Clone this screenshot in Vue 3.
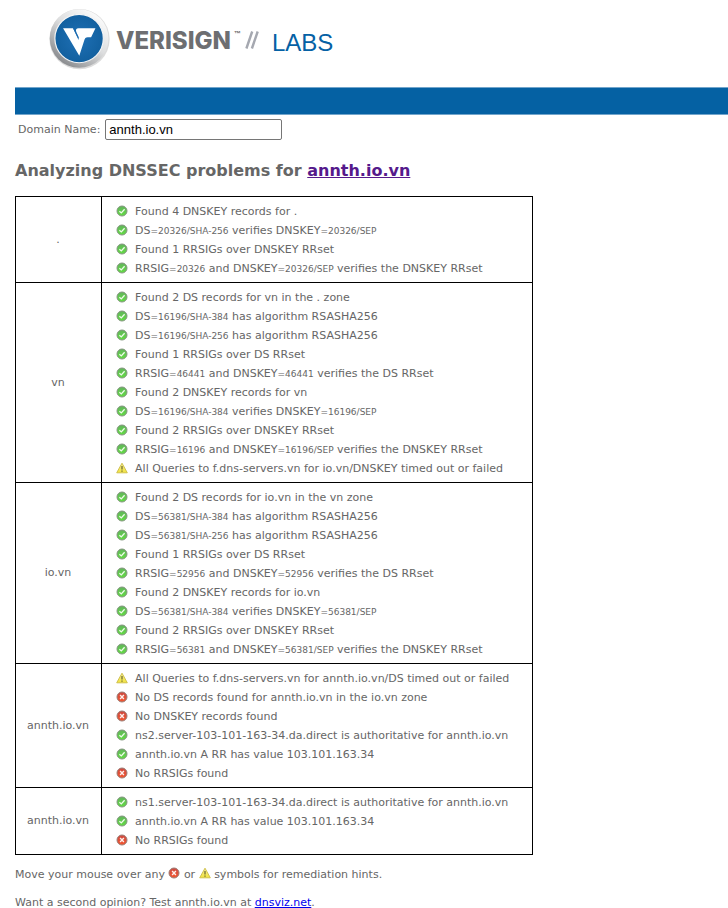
<script setup>
import { ref, h } from 'vue'

const domain = ref('annth.io.vn')

/* Text between square brackets is set in the small key size. */
const zones = [
  {
    name: '.',
    checks: [
      ['ok', 'Found 4 DNSKEY records for .'],
      ['ok', 'DS[=20326/SHA-256] verifies DNSKEY[=20326/SEP]'],
      ['ok', 'Found 1 RRSIGs over DNSKEY RRset'],
      ['ok', 'RRSIG[=20326] and DNSKEY[=20326/SEP] verifies the DNSKEY RRset'],
    ],
  },
  {
    name: 'vn',
    checks: [
      ['ok', 'Found 2 DS records for vn in the . zone'],
      ['ok', 'DS[=16196/SHA-384] has algorithm RSASHA256'],
      ['ok', 'DS[=16196/SHA-256] has algorithm RSASHA256'],
      ['ok', 'Found 1 RRSIGs over DS RRset'],
      ['ok', 'RRSIG[=46441] and DNSKEY[=46441] verifies the DS RRset'],
      ['ok', 'Found 2 DNSKEY records for vn'],
      ['ok', 'DS[=16196/SHA-384] verifies DNSKEY[=16196/SEP]'],
      ['ok', 'Found 2 RRSIGs over DNSKEY RRset'],
      ['ok', 'RRSIG[=16196] and DNSKEY[=16196/SEP] verifies the DNSKEY RRset'],
      ['warn', 'All Queries to f.dns-servers.vn for io.vn/DNSKEY timed out or failed'],
    ],
  },
  {
    name: 'io.vn',
    checks: [
      ['ok', 'Found 2 DS records for io.vn in the vn zone'],
      ['ok', 'DS[=56381/SHA-384] has algorithm RSASHA256'],
      ['ok', 'DS[=56381/SHA-256] has algorithm RSASHA256'],
      ['ok', 'Found 1 RRSIGs over DS RRset'],
      ['ok', 'RRSIG[=52956] and DNSKEY[=52956] verifies the DS RRset'],
      ['ok', 'Found 2 DNSKEY records for io.vn'],
      ['ok', 'DS[=56381/SHA-384] verifies DNSKEY[=56381/SEP]'],
      ['ok', 'Found 2 RRSIGs over DNSKEY RRset'],
      ['ok', 'RRSIG[=56381] and DNSKEY[=56381/SEP] verifies the DNSKEY RRset'],
    ],
  },
  {
    name: 'annth.io.vn',
    checks: [
      ['warn', 'All Queries to f.dns-servers.vn for annth.io.vn/DS timed out or failed'],
      ['bad', 'No DS records found for annth.io.vn in the io.vn zone'],
      ['bad', 'No DNSKEY records found'],
      ['ok', 'ns2.server-103-101-163-34.da.direct is authoritative for annth.io.vn'],
      ['ok', 'annth.io.vn A RR has value 103.101.163.34'],
      ['bad', 'No RRSIGs found'],
    ],
  },
  {
    name: 'annth.io.vn',
    checks: [
      ['ok', 'ns1.server-103-101-163-34.da.direct is authoritative for annth.io.vn'],
      ['ok', 'annth.io.vn A RR has value 103.101.163.34'],
      ['bad', 'No RRSIGs found'],
    ],
  },
]

const parts = (text) =>
  text
    .split(/(\[[^\]]+\])/)
    .filter(Boolean)
    .map((t) => ({ small: t[0] === '[', text: t.replace(/[[\]]/g, '') }))

const StatusIcon = (props) => {
  const attrs = { class: 'status-icon', viewBox: '0 0 12 12', 'aria-hidden': 'true' }
  if (props.kind === 'warn') {
    return h('svg', attrs, [
      h('path', {
        d: 'M6 1.2 11.3 10.8H.7Z',
        fill: 'url(#g-warn)',
        stroke: '#cfc04c',
        'stroke-linejoin': 'round',
      }),
      h('path', { d: 'M6 4v3.4M6 8.4v1.3', stroke: '#65622c', 'stroke-width': 1.2 }),
    ])
  }
  const ok = props.kind === 'ok'
  return h('svg', attrs, [
    h('circle', {
      cx: 6,
      cy: 6,
      r: 5,
      fill: ok ? 'url(#g-ok)' : 'url(#g-bad)',
      stroke: ok ? '#84967f' : '#9a7d76',
    }),
    h('path', {
      d: ok ? 'M3.4 6.2 5.3 7.9 8.6 4.2' : 'M4.1 4.1 7.9 7.9M7.9 4.1 4.1 7.9',
      fill: 'none',
      stroke: ok ? '#f0fbec' : '#fdeeea',
      'stroke-width': ok ? 1.3 : 1.4,
    }),
  ])
}
StatusIcon.props = ['kind']
</script>

<template>
  <div class="page">
    <svg class="defs" width="0" height="0" aria-hidden="true">
      <defs>
        <linearGradient id="g-ok" x2="0" y2="1">
          <stop offset="0" stop-color="#62b45c" />
          <stop offset="1" stop-color="#62dc42" />
        </linearGradient>
        <linearGradient id="g-bad" x2="0" y2="1">
          <stop offset="0" stop-color="#cc4a42" />
          <stop offset="1" stop-color="#f4552e" />
        </linearGradient>
        <linearGradient id="g-warn" x2="0" y2="1">
          <stop offset="0" stop-color="#f6efa0" />
          <stop offset="1" stop-color="#f2e23a" />
        </linearGradient>
      </defs>
    </svg>

    <header class="brand">
      <svg class="emblem" viewBox="0 0 64 64" aria-hidden="true">
        <defs>
          <linearGradient id="g-ring" x1=".8" y1=".1" x2=".2" y2=".9">
            <stop offset="0" stop-color="#fafafa" />
            <stop offset=".45" stop-color="#dddedf" />
            <stop offset="1" stop-color="#8b8d90" />
          </linearGradient>
          <radialGradient id="g-disc">
            <stop offset="0" stop-color="#1f70b5" />
            <stop offset="1" stop-color="#12609f" />
          </radialGradient>
        </defs>
        <circle cx="32" cy="31.6" r="30.6" fill="#dcdcdc" />
        <circle cx="31.6" cy="31" r="29.8" fill="url(#g-ring)" />
        <circle cx="31.6" cy="31" r="24.6" fill="url(#g-disc)" stroke="#f3f4f5" stroke-width="1.2" />
        <path d="M15.3 20.6H25.4L31 32.6Q32 31.2 30.6 28.4L28.8 24.6Q27.4 20.6 31 20.6H48.2L43.8 29.6H40.4Q37.4 29.6 36.8 33L31.8 48.4Z" fill="#fff" />
        <path d="M26 20.6 30.8 30.2" fill="none" stroke="#1b6bb0" stroke-width="1" />
      </svg>
      <span class="wordmark">VERISIGN</span>
      <sup class="tm">™</sup>
      <svg class="slashes" viewBox="0 0 14 18" aria-hidden="true">
        <path d="M1.4 17.5 7.2 .5M6.9 17.5 12.7 .5" stroke="#a5a8b0" stroke-width="2.4" />
      </svg>
      <span class="labs">LABS</span>
    </header>

    <div class="bar"></div>

    <form class="lookup" @submit.prevent>
      <label for="domain">Domain Name:</label>
      <input id="domain" v-model="domain" type="text" />
    </form>

    <h1>Analyzing DNSSEC problems for <a class="visited" href="#annth.io.vn">annth.io.vn</a></h1>

    <table>
      <tbody>
        <tr v-for="(zone, i) in zones" :key="i">
          <th scope="row">{{ zone.name }}</th>
          <td>
            <ul>
              <li v-for="([kind, text], j) in zone.checks" :key="j">
                <StatusIcon :kind="kind" />
                <span><span v-for="(p, k) in parts(text)" :key="k" :class="{ key: p.small }">{{ p.text }}</span></span>
              </li>
            </ul>
          </td>
        </tr>
      </tbody>
    </table>

    <p>Move your mouse over any <StatusIcon kind="bad" /> or <StatusIcon kind="warn" /> symbols for remediation hints.</p>
    <p>Want a second opinion? Test annth.io.vn at <a href="#dnsviz">dnsviz.net</a>.</p>
  </div>
</template>

<style>
body {
  margin: 0;
  background: #fff;
}
</style>

<style scoped>
.page {
  padding: 8px 0 0 15px;
  color: #666;
  font-family: Verdana, "DejaVu Sans", sans-serif;
  font-size: 11px;
  line-height: 14px;
}
.defs {
  position: absolute;
}
.brand {
  display: flex;
  align-items: center;
  height: 63px;
  padding: 0 0 16px 33px;
}
.emblem {
  width: 63px;
  height: 63px;
}
.wordmark {
  margin-left: 5px;
  padding-top: 3px;
  color: #6d6e71;
  font: 800 24px/24px Inter, "Liberation Sans", sans-serif;
}
.tm {
  align-self: flex-start;
  padding-top: 20px;
  margin-left: 3px;
  font: 700 7px/12px "Liberation Sans", sans-serif;
}
.slashes {
  width: 14px;
  height: 18px;
  margin-left: 4px;
}
.labs {
  margin-left: 13px;
  padding-top: 6px;
  color: #0561a5;
  font: 24px/24px "Liberation Sans", Arial, sans-serif;
}
.bar {
  height: 26px;
  background: #0561a3;
  border-top: 1px solid #72a5cb;
  border-bottom: 1px solid #72a5cb;
}
.lookup {
  display: flex;
  align-items: center;
  gap: 5px;
  padding: 4px 3px;
}
.lookup input {
  box-sizing: border-box;
  width: 177px;
  height: 21px;
  padding: 1px 3px;
  color: #000;
  background: #fff;
  border: 1px solid #767676;
  border-radius: 2px;
  font: 13px "Liberation Sans", Arial, sans-serif;
}
h1 {
  margin: 17px 0 15px;
  font-size: 16px;
  line-height: 20px;
}
a {
  color: #00e;
}
a.visited {
  color: #551a8b;
}
table {
  border-collapse: collapse;
}
th,
td {
  border: 1px solid #000;
}
th {
  padding: 0 12px 0 11px;
  font-weight: normal;
  text-align: center;
}
td {
  padding: 5px 23px 4px 14px;
}
ul {
  margin: 0;
  padding: 0;
  list-style: none;
}
li {
  display: flex;
  align-items: flex-start;
  gap: 7px;
  height: 19px;
  line-height: 20px;
  white-space: nowrap;
}
.key {
  font-size: 9px;
  line-height: 1;
}
p {
  margin: 12px 0 14px;
}
.status-icon {
  width: 12px;
  height: 12px;
}
li .status-icon {
  margin-top: 3px;
}
p .status-icon {
  vertical-align: -1px;
}
</style>
